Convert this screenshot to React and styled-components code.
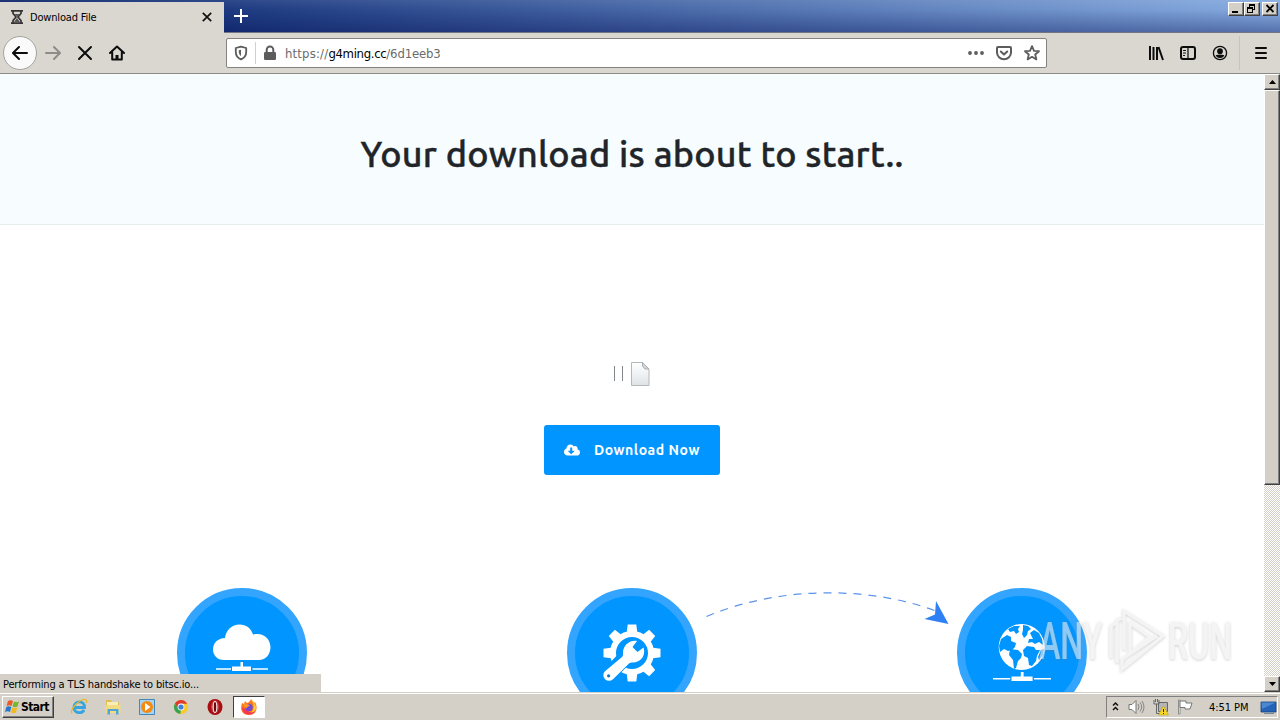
import React from 'react';
import styled, { createGlobalStyle, css } from 'styled-components';
import { FaCloudDownloadAlt } from 'react-icons/fa';

const GlobalStyle = createGlobalStyle`
    * {
        box-sizing: border-box;
    }
    body {
        margin: 0;
        overflow: hidden;
        background-color: white;
    }
`;

const face = '#d4d0c8';
const toolbarFace = '#dad7d0';
const tahoma = "'DejaVu Sans Condensed', 'DejaVu Sans', sans-serif";
const ubuntu = "Ubuntu, 'Noto Sans', sans-serif";

const raised = css`
    border: 1px solid;
    border-color: #fff #404040 #404040 #fff;
    box-shadow: inset -1px -1px 0 #808080;
    background-color: ${face};
`;

const Screen = styled.div`
    display: flex;
    flex-direction: column;
    width: 1280px;
    height: 720px;
    overflow: hidden;
    font-family: ${tahoma};
    font-size: 11px;
    color: #000;
`;

const Label = styled.span`
    font-size: ${(props) => props.$size || 11}px;
    font-weight: ${(props) => props.$weight || 400};
    letter-spacing: ${(props) => props.$spacing || 0}px;
    color: ${(props) => props.$color || '#000'};
    white-space: pre;
`;

const TitleBar = styled.div`
    display: flex;
    height: 33px;
    padding-top: 2px;
    border-bottom: 1px solid #707783;
    background: linear-gradient(
            rgba(255, 255, 255, 0.08),
            rgba(255, 255, 255, 0) 30%,
            rgba(0, 10, 80, 0.36)
        ),
        linear-gradient(90deg, #0a246a 0, #1d3a80 224px, #86abe0 100%);
`;

const Tab = styled.div`
    display: flex;
    align-items: center;
    width: 224px;
    height: 31px;
    padding: 0 11px 1px 10px;
    background-color: ${toolbarFace};

    svg:last-child {
        margin-left: auto;
    }
    span {
        margin-left: 6px;
    }
`;

const NewTab = styled.div`
    padding: 7px 0 0 10px;
    height: 30px;
`;

const WindowButtons = styled.div`
    display: flex;
    height: 14px;
    margin-left: auto;
    padding-right: 2px;
`;

const WindowButton = styled.div`
    ${raised}
    width: 16px;
    height: 14px;
    margin-left: ${(props) => props.$gap || 0}px;

    svg {
        display: block;
    }
`;

const Toolbar = styled.div`
    display: flex;
    align-items: center;
    height: 41px;
    border-bottom: 1px solid #8b8b88;
    background-color: ${toolbarFace};
`;

const BackButton = styled.div`
    display: flex;
    align-items: center;
    justify-content: center;
    width: 34px;
    height: 34px;
    margin-left: 3px;
    border: 1px solid #a5a39e;
    border-radius: 50%;
    background-color: #fafafa;
`;

const NavIcons = styled.div`
    display: flex;
    gap: 16px;
    padding-left: 8px;
    width: 189px;
`;

const UrlBar = styled.div`
    display: flex;
    align-items: center;
    width: 821px;
    height: 30px;
    padding: 0 6px;
    border: 1px solid #85837f;
    border-radius: 2px;
    background-color: #fff;
`;

const UrlDivider = styled.div`
    width: 1px;
    height: 22px;
    margin: 0 6px;
    background-color: #d0d0d0;
`;

const Url = styled.div`
    display: flex;
    margin-left: 7px;
    padding-top: 1px;
`;

const UrlActions = styled.div`
    display: flex;
    gap: 12px;
    margin-left: auto;
`;

const ToolIcons = styled.div`
    display: flex;
    gap: 16px;
    margin-left: 101px;
`;

const MenuButton = styled.div`
    display: flex;
    align-items: center;
    height: 34px;
    margin-left: 11px;
    padding-left: 13px;
    border-left: 1px solid #c8c4bd;
`;

const Viewport = styled.div`
    position: relative;
    display: flex;
    height: 618px;
`;

const Page = styled.main`
    width: 1264px;
    height: 618px;
    overflow: hidden;
    background-color: #fff;
    font-family: ${ubuntu};
`;

const Hero = styled.header`
    display: flex;
    justify-content: center;
    height: 151px;
    padding-top: 56px;
    border-bottom: 1px solid #e6eef0;
    background-color: #f7fcff;
`;

const Heading = styled.h1`
    margin: 0;
    font-size: 36px;
    font-weight: 500;
    line-height: 48px;
    letter-spacing: 0.22px;
    white-space: nowrap;
    color: #212529;
    -webkit-text-stroke: 0.4px #212529;
`;

const FileInfo = styled.div`
    display: flex;
    justify-content: center;
    height: 200px;
    padding-top: 137px;
`;

const Pipes = styled.div`
    display: flex;
    gap: 7px;
    padding-top: 4px;
    margin-right: 8px;
`;

const Pipe = styled.div`
    width: 1px;
    height: 15px;
    background-color: #85888c;
`;

const DownloadButton = styled.button`
    display: flex;
    align-items: center;
    width: 176px;
    height: 50px;
    margin: 0 auto;
    padding: 0 0 0 20px;
    border: 0;
    border-radius: 3px;
    background-color: #0095ff;
    color: #fff;
    font-family: ${ubuntu};

    span {
        margin-left: 14px;
    }
`;

const Steps = styled.section`
    display: flex;
    width: 1170px;
    margin: 113px 0 0 47px;
`;

const Step = styled.div`
    position: relative;
    display: flex;
    justify-content: center;
    width: 390px;
`;

const StepCircle = styled.div`
    display: flex;
    align-items: center;
    justify-content: center;
    width: 130px;
    height: 130px;
    border: 8px solid #33a5ff;
    border-radius: 50%;
    background-color: #0095ff;
`;

const StepArrow = styled.svg`
    position: absolute;
    left: 269px;
    top: 0;
    z-index: 1;
`;

const Watermark = styled.svg`
    position: absolute;
    left: 1030px;
    top: 524px;
    font-family: Roboto, sans-serif;
    font-weight: 500;
`;

const StatusBar = styled.div`
    position: absolute;
    left: 0;
    bottom: 0;
    width: 321px;
    height: 18px;
    padding: 4px 3px 0;
    line-height: 14px;
    background-color: ${face};
`;

const Scrollbar = styled.div`
    display: flex;
    flex-direction: column;
    width: 16px;
    height: 618px;
    background: repeating-conic-gradient(#d4d0c8 0 25%, #fff 0 50%) 0 0 / 2px 2px;
`;

const ScrollButton = styled.div`
    ${raised}
    display: flex;
    align-items: center;
    justify-content: center;
    height: 16px;
    margin-top: ${(props) => (props.$end ? 'auto' : 0)};
`;

const ScrollThumb = styled.div`
    ${raised}
    height: 395px;
`;

const Taskbar = styled.footer`
    display: flex;
    align-items: center;
    height: 28px;
    padding-top: 1px;
    border-top: 1px solid ${face};
    box-shadow: inset 0 1px 0 #fff;
    background-color: ${face};
`;

const StartButton = styled.div`
    ${raised}
    display: flex;
    align-items: center;
    gap: 1px;
    width: 52px;
    height: 22px;
    margin-left: 2px;
    padding-left: 2px;
`;

const Launchers = styled.div`
    display: flex;
    gap: 16px;
    padding: 0 9px 0 16px;
`;

const ActiveTask = styled.div`
    display: flex;
    align-items: center;
    justify-content: center;
    width: 32px;
    height: 22px;
    border: 1px solid;
    border-color: #404040 #fff #fff #404040;
    background-color: #fff;
`;

const Tray = styled.div`
    display: flex;
    align-items: center;
    width: 172px;
    height: 22px;
    margin: 0 2px 0 auto;
    border: 1px solid;
    border-color: #808080 #fff #fff #808080;
    padding-left: 4px;
`;

const TrayIcons = styled.div`
    display: flex;
    align-items: center;
    gap: 8px;
    width: 98px;
`;

const ShowDesktop = styled.div`
    display: flex;
    margin-left: auto;
`;

const Icon = ({ size = 16, stroke = '#0c0c0d', width = 2, children }) => (
    <svg
        width={size}
        height={size}
        viewBox="0 0 16 16"
        fill="none"
        stroke={stroke}
        strokeWidth={width}
        strokeLinecap="round"
        strokeLinejoin="round"
    >
        {children}
    </svg>
);

const Browser = () => (
    <>
        <TitleBar>
            <Tab>
                <svg width="14" height="16" viewBox="0 0 14 16">
                    <path
                        d="M1 1.9h12M1 14.1h12M3 2.5v2L6 8l-3 3.5v2M11 2.5v2L8 8l3 3.5v2"
                        fill="none"
                        stroke="#333"
                        strokeWidth="1.7"
                    />
                    <path d="M4.4 5h5.2L7 7.6zM7 9l3 4H4z" fill="#555" />
                </svg>
                <Label $spacing={-0.18}>Download File</Label>
                <svg width="12" height="12" viewBox="0 0 12 12">
                    <path
                        d="M1.8 1.8l8.4 8.4M10.2 1.8l-8.4 8.4"
                        stroke="#111"
                        strokeWidth="1.7"
                    />
                </svg>
            </Tab>
            <NewTab>
                <svg width="14" height="14" viewBox="0 0 14 14">
                    <path d="M7 0v14M0 7h14" stroke="#fff" strokeWidth="2" />
                </svg>
            </NewTab>
            <WindowButtons>
                <WindowButton>
                    <svg width="14" height="12">
                        <path d="M3 8h6v2H3z" />
                    </svg>
                </WindowButton>
                <WindowButton>
                    <svg width="14" height="12" shapeRendering="crispEdges">
                        <path
                            fillRule="evenodd"
                            d="M4 1h6v6H8V6h1V3H5v1H4zM2 4h6v6H2zM3 6h4v3H3z"
                        />
                    </svg>
                </WindowButton>
                <WindowButton $gap={2}>
                    <svg width="14" height="12">
                        <path
                            d="M3.5 2l7 7M10.5 2l-7 7"
                            stroke="#000"
                            strokeWidth="1.8"
                        />
                    </svg>
                </WindowButton>
            </WindowButtons>
        </TitleBar>
        <Toolbar>
            <BackButton>
                <Icon>
                    <path d="M15 8H1.5M7 2L1 8l6 6" />
                </Icon>
            </BackButton>
            <NavIcons>
                <Icon stroke="#8e8c88">
                    <path d="M1 8h13.5M9 2l6 6-6 6" />
                </Icon>
                <Icon>
                    <path d="M2 2l12 12M14 2L2 14" />
                </Icon>
                <Icon>
                    <path d="M1 8l7-6.5L15 8M3.2 7.5v7h9.6v-7" />
                    <path d="M8 14v-4" strokeWidth="3" strokeLinecap="butt" />
                </Icon>
            </NavIcons>
            <UrlBar>
                <Icon stroke="#5c5c5e" width={1.8}>
                    <path d="M8 1.6L2.8 3v4c0 3.6 2 6 5.2 7.4 3.2-1.4 5.2-3.8 5.2-7.4V3z" />
                    <path
                        d="M8 4.7v6.2C6.6 10 5.8 8.7 5.8 6.7V5.2z"
                        fill="#5c5c5e"
                        stroke="none"
                    />
                </Icon>
                <UrlDivider />
                <svg width="16" height="16" viewBox="0 0 16 16">
                    <path
                        d="M4.7 8V4.7a3.3 3.3 0 0 1 6.6 0V8"
                        fill="none"
                        stroke="#5c5c5e"
                        strokeWidth="2"
                    />
                    <rect x="2" y="7" width="12" height="8" rx="1.3" fill="#5c5c5e" />
                </svg>
                <Url>
                    <Label $size={13} $color="#6b6b6b" $spacing={0.18}>
                        https://
                    </Label>
                    <Label $size={13} $spacing={-0.33}>
                        g4ming.cc
                    </Label>
                    <Label $size={13} $color="#6b6b6b" $spacing={-0.17}>
                        /6d1eeb3
                    </Label>
                </Url>
                <UrlActions>
                    <svg width="16" height="16" fill="#5c5c5e">
                        <circle cx="2" cy="8" r="1.9" />
                        <circle cx="8" cy="8" r="1.9" />
                        <circle cx="14" cy="8" r="1.9" />
                    </svg>
                    <Icon stroke="#5c5c5e">
                        <path d="M2 2h12a1 1 0 0 1 1 1v4.5a7 6.7 0 0 1-14 0V3a1 1 0 0 1 1-1z" />
                        <path d="M4.8 6.5L8 9.5l3.2-3" />
                    </Icon>
                    <Icon stroke="#5c5c5e" width={1.8}>
                        <path d="M8 1.2l2 4.6 5 .4-3.8 3.3 1.2 4.9L8 11.8l-4.4 2.6 1.2-4.9L1 6.2l5-.4z" />
                    </Icon>
                </UrlActions>
            </UrlBar>
            <ToolIcons>
                <svg width="16" height="16" stroke="#0c0c0d" strokeWidth="2">
                    <path d="M2 1v14M5.5 2v13M9 2v13M10.5 2l4.5 13" />
                </svg>
                <Icon>
                    <rect x="1" y="2" width="14" height="12" rx="2" />
                    <path
                        d="M8 2v12M3.5 5.5h2M3.5 8h2M3.5 10.5h1"
                        strokeWidth="1.2"
                    />
                </Icon>
                <Icon width={1.3}>
                    <circle cx="8" cy="8" r="6.6" />
                    <circle cx="8" cy="6.2" r="2.2" fill="#0c0c0d" />
                    <path
                        d="M4.5 10.6c2-.4 5-.4 7 0-.8 1.4-2 1.8-3.5 1.8s-2.700-.4-3.500-1.8z"
                        fill="#0c0c0d"
                    />
                </Icon>
            </ToolIcons>
            <MenuButton>
                <Icon>
                    <path d="M3 3h10M3 8h10M3 13h10" />
                </Icon>
            </MenuButton>
        </Toolbar>
    </>
);

const CloudIcon = () => (
    <svg width="60" height="60" viewBox="0 0 60 60" fill="#fff">
        <path d="M12 37C5 37 1 32 1 26.5 1 20 6 15 13 15 14 7 20 1.5 27.5 1.5 34 1.5 39 5 41 11.5 51 9 58 15 58.5 24 58.5 31 54 37 47 37z" />
        <path d="M28.5 39h2.5v4.5h8V48H20v-4.5h8.5zM4 45.3h15v1.4H4zM40.5 45.3H56v1.4H40.5z" />
    </svg>
);

const GearIcon = () => (
    <svg width="60" height="60" viewBox="0 0 60 60">
        <g transform="translate(30 30)" fill="#fff">
            {[0, 45, 90, 135, 180, 225, 270, 315].map((angle) => (
                <path
                    key={angle}
                    transform={`rotate(${angle})`}
                    d="M-4.3-28.5h8.6L5.5-19h-11z"
                />
            ))}
            <circle r="19" fill="none" stroke="#fff" strokeWidth="6" />
        </g>
        <path
            d="M6 52L25 33"
            stroke="#0095ff"
            strokeWidth="15"
            strokeLinecap="round"
        />
        <path
            d="M35 18c-7-1-14 4-14 12 0 2 0 3-1 4L3 48.2a5.5 5.5 0 0 0 8 8L27 40.5c1-1 2-1 4-1 8 0 13-7 10.5-15l-6 4.5-5-5z"
            fill="#fff"
        />
        <circle cx="6.6" cy="52.8" r="1.6" fill="#0878c8" />
    </svg>
);

const GlobeIcon = () => (
    <svg width="60" height="60" viewBox="0 0 60 60">
        <circle cx="29.7" cy="24" r="23" fill="#fff" />
        <g fill="#0095ff">
            <path d="M9 16l6-4 4 2 0 4 5 2-1 4-3 3-4 1-4-2-4 3-1-6z" />
            <path d="M16 6l6-3 6 0-2 3 1 3-3 2-2-3-4 1z" />
            <path d="M31 2l5 1 3 3-3 2-1 4-3 3-2-4 1-4z" />
            <path d="M38 10l4-3 5 3 3 6 1 6-4-3-4 2-3-2-4 1 1-4 4 0z" />
            <path d="M18 26l8 1 4 4-1 4-3 3-2 7-2 1-1-9-4-5z" />
            <path d="M31 27l4-4 7 1 2 3 4 0-3 6-1 5-4 5-3-1-1-7-4-2z" />
            <path d="M49 27l3-1-1 6-4 5-1-3z" />
        </g>
        <path
            d="M28.8 49h2.8v4.5h9V58H19.5v-4.5h9.3zM1 55h17.2v1.6H1zM42 55H59v1.6H42z"
            fill="#fff"
        />
    </svg>
);

const Arrow = () => (
    <StepArrow width="244" height="40" viewBox="0 0 244 40">
        <path
            d="M0.5 28.5C70-1 160-3 230 23"
            fill="none"
            stroke="#5b94ea"
            strokeWidth="1.2"
            strokeDasharray="8 7"
        />
        <path d="M230 13L242.5 36 218.5 31 229 26.5z" fill="#2f80f5" />
    </StepArrow>
);

const DownloadPage = () => (
    <Page>
        <Hero>
            <Heading>Your download is about to start..</Heading>
        </Hero>
        <FileInfo>
            <Pipes>
                <Pipe />
                <Pipe />
            </Pipes>
            <svg width="19" height="24" viewBox="0 0 19 24">
                <defs>
                    <linearGradient id="paper" x2="0" y2="1">
                        <stop stopColor="#fff" />
                        <stop offset="1" stopColor="#dfe3e6" />
                    </linearGradient>
                </defs>
                <path
                    d="M.5.5h11l6.5 6.5v16.5H.5z"
                    fill="url(#paper)"
                    stroke="#b3b8ba"
                />
                <path d="M11.5.5V4l2.5 3h4z" fill="#d3d8da" stroke="#a8adb0" />
            </svg>
        </FileInfo>
        <DownloadButton>
            <FaCloudDownloadAlt size={16} />
            <Label $size={14} $weight={600} $color="#fff" $spacing={0.55}>
                Download Now
            </Label>
        </DownloadButton>
        <Steps>
            <Step>
                <StepCircle>
                    <CloudIcon />
                </StepCircle>
            </Step>
            <Step>
                <StepCircle>
                    <GearIcon />
                </StepCircle>
                <Arrow />
            </Step>
            <Step>
                <StepCircle>
                    <GlobeIcon />
                </StepCircle>
            </Step>
        </Steps>
    </Page>
);

const AnyRun = () => (
    <Watermark width="234" height="84" viewBox="0 0 234 84">
        <defs>
            <filter id="soft" x="-10%" y="-10%" width="120%" height="120%">
                <feDropShadow
                    dx="0"
                    dy="1"
                    stdDeviation="1.6"
                    floodColor="#777"
                    floodOpacity=".6"
                />
            </filter>
        </defs>
        <g filter="url(#soft)" opacity=".6" fill="#eee" fontSize="52">
            <text transform="translate(9 61) scale(.62 1)">ANY</text>
            <text transform="translate(138 61) scale(.62 1)">RUN</text>
            <path
                d="M81 60V28l5-3M87 65V22l5-2M94 52V13l39 25-41 33v-9l28-23-20-14v31l27-18"
                fill="none"
                stroke="#eee"
                strokeWidth="3"
            />
        </g>
    </Watermark>
);

const Chrome = () => (
    <svg width="18" height="18" viewBox="-1 -1 18 18">
        <circle cx="8" cy="8" r="7" fill="#f9c928" />
        <path d="M1.9 4.5A7 7 0 0 1 14.2 4.7H8L5.2 9.8z" fill="#dd3b32" />
        <path d="M1.9 4.5L5.2 9.8 8 11.2 7.2 15A7 7 0 0 1 1.9 4.5z" fill="#35a352" />
        <circle cx="8" cy="8" r="3.4" fill="#fff" />
        <circle cx="8" cy="8" r="2.6" fill="#3f7fe0" />
    </svg>
);

const Firefox = () => (
    <svg width="18" height="18" viewBox="0 0 18 18">
        <path
            d="M2 5l2 1 1-3 2 2c2-.5 3-2 4-4 1 2 2 2 3 4l1-1c3 5 2 13-6 13S0 10 2 5z"
            fill="#ff7a1c"
        />
        <path d="M11 1c2 2 5 5 5 9 0 3-3 5-5 5 3-3 4-8 0-14z" fill="#ffcb2e" />
        <path d="M2 9c0 9 11 10 14 3-2 3-6 3-8 1z" fill="#f53855" />
        <circle cx="9" cy="9.5" r="3.7" fill="#7149d6" />
        <path d="M4 6c3-1 4 1 6 1-1 2-3 1-3 3-2 0-3-2-3-4z" fill="#ff982c" />
    </svg>
);

const SystemTaskbar = () => (
    <Taskbar>
        <StartButton>
            <svg width="15" height="16" viewBox="0 0 15 16">
                <path d="M3 2c2-1 3-1 5 0L6.5 7C5 6 3.5 6 1.5 7z" fill="#e95a24" />
                <path d="M9 2.5c2 1 3 1 5 0L12.5 7.5c-2 1-3 1-5 0z" fill="#76b82a" />
                <path d="M1.3 8c2-1 3-1 5 0L5 13c-2-1-3-1-5 0z" fill="#2678cb" />
                <path d="M7.3 8.5c2 1 3 1 5 0L11 13.5c-2 1-3 1-5 0z" fill="#f4b91d" />
            </svg>
            <Label $size={12} $weight={700} $spacing={-0.6}>
                Start
            </Label>
        </StartButton>
        <Launchers>
            <svg width="18" height="18" viewBox="0 0 18 18">
                <path
                    d="M4 9.5h10.5C15 2 4 2 4 9.5c0 6 8 6.5 10 2.5"
                    fill="none"
                    stroke="#35a4df"
                    strokeWidth="2.8"
                />
                <path
                    d="M2 15.5C-1 11 12-1 16 2c1 1 .5 2.5 0 3"
                    fill="none"
                    stroke="#e5b830"
                    strokeWidth="1.3"
                />
            </svg>
            <svg width="18" height="18" viewBox="0 0 18 18">
                <path d="M2 2h5l1 2h7v11H2z" fill="#dfbd55" />
                <path d="M3 4h11v3H3z" fill="#f8edb4" />
                <path d="M1.5 7h15v8h-15z" fill="#f1db83" />
                <path d="M3.5 16.5V11h11v5.5h-2.5V13H6v3.5z" fill="#51a6d5" />
            </svg>
            <svg width="18" height="18" viewBox="0 0 18 18">
                <path d="M1.5 1.5h15v15h-15z" fill="#a9d2ee" stroke="#4386b8" />
                <circle cx="9" cy="9" r="6" fill="#f38a13" />
                <path d="M7 5l5.5 4L7 13z" fill="#fff" />
            </svg>
            <Chrome />
            <svg width="18" height="18" viewBox="0 0 18 18">
                <ellipse cx="9" cy="9" rx="7.5" ry="8" fill="#a70d12" />
                <ellipse cx="9" cy="8.7" rx="4" ry="6.5" fill="#c93a38" />
                <ellipse cx="9" cy="9" rx="2.4" ry="6" fill="#fff" />
                <ellipse cx="9" cy="9" rx="1.3" ry="5" fill="#6f080c" />
            </svg>
        </Launchers>
        <ActiveTask>
            <Firefox />
        </ActiveTask>
        <Tray>
            <TrayIcons>
                <svg width="9" height="12" viewBox="0 0 9 12">
                    <path
                        d="M2 4.5L4.5 2 7 4.5M2 9L4.5 6.5 7 9"
                        fill="none"
                        stroke="#111"
                        strokeWidth="1.5"
                    />
                </svg>
                <svg width="17" height="16" viewBox="0 0 17 16">
                    <path d="M1 5.5h3L8 1.5v13l-4-4H1z" fill="#fff" stroke="#777" />
                    <path
                        d="M10 5q2 3 0 6M12 3.5q3.5 4.5 0 9M14 2q4 6 0 12"
                        fill="none"
                        stroke="#858585"
                    />
                </svg>
                <svg width="16" height="17" viewBox="0 0 16 17">
                    <path d="M5.5 3.5h9v9h-9z" fill="#b5b5b5" stroke="#666" />
                    <path
                        d="M1 1v4h5V1M2.5 0v3M4.5 0v3M3.5 5v9.5H9"
                        fill="none"
                        stroke="#666"
                    />
                    <path
                        d="M10.5 7l5 9h-10z"
                        fill="#f8d92b"
                        stroke="#bba000"
                        strokeWidth=".6"
                    />
                    <path d="M10.5 10v3M10.5 14v1" stroke="#222" />
                </svg>
                <svg width="17" height="16" viewBox="0 0 17 16">
                    <path
                        d="M1.5 1v14h1.5V1z"
                        fill="#fff"
                        stroke="#777"
                        strokeWidth=".8"
                    />
                    <path d="M3 2h6v2h6l-2 6H8V8.5H3z" fill="#fff" stroke="#777" />
                </svg>
            </TrayIcons>
            <Label $spacing={-0.05}>4:51 PM</Label>
            <ShowDesktop>
                <svg width="17" height="15" viewBox="0 0 17 15">
                    <path
                        d="M1 2h15v10H1z"
                        fill="#2563b8"
                        stroke="#163f78"
                        strokeWidth=".8"
                    />
                    <path d="M1.5 2.5h14L2 9z" fill="#4a88d2" />
                    <path d="M4 13h10v1H4z" fill="#789" />
                </svg>
            </ShowDesktop>
        </Tray>
    </Taskbar>
);

const App = () => (
    <Screen>
        <GlobalStyle />
        <Browser />
        <Viewport>
            <DownloadPage />
            <Scrollbar>
                <ScrollButton>
                    <svg width="7" height="4">
                        <path d="M0 4L3.5 0 7 4z" />
                    </svg>
                </ScrollButton>
                <ScrollThumb />
                <ScrollButton $end>
                    <svg width="7" height="4">
                        <path d="M0 0h7L3.5 4z" />
                    </svg>
                </ScrollButton>
            </Scrollbar>
            <StatusBar>
                <Label $spacing={-0.15}>
                    Performing a TLS handshake to bitsc.io...
                </Label>
            </StatusBar>
            <AnyRun />
        </Viewport>
        <SystemTaskbar />
    </Screen>
);

export default App;
